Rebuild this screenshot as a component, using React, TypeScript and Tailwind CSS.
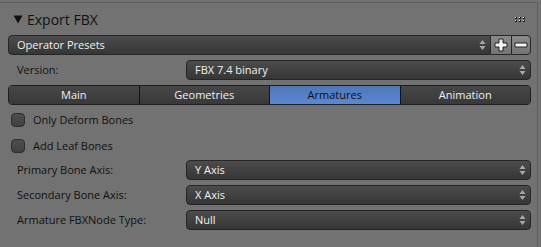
import React from "react";

const font = { fontFamily: '"Open Sans", "Noto Sans", sans-serif' };

function Arrows() {
  return (
    <svg width="7" height="12" viewBox="0 0 7 12" className="shrink-0">
      <path d="M3.5 1 L6.5 5 L0.5 5 Z" fill="#a8a8a8" />
      <path d="M3.5 11 L6.5 7 L0.5 7 Z" fill="#a8a8a8" />
    </svg>
  );
}

function Select({ value, className = "" }: { value: string; className?: string }) {
  return (
    <div
      className={`flex h-[20px] items-center justify-between rounded-[4px] border border-[#262626] bg-gradient-to-b from-[#4c4c4c] to-[#363636] pl-[8px] pr-[4px] text-[11px] text-[#f0f0f0] ${className}`}
    >
      <span>{value}</span>
      <Arrows />
    </div>
  );
}

function Row({ label, value }: { label: string; value: string }) {
  return (
    <div className="flex h-[20px] items-center">
      <span className="w-[178px] pl-[9px] text-[11px] text-[#111]">{label}</span>
      <Select value={value} className="flex-1" />
    </div>
  );
}

function Check({ label }: { label: string }) {
  return (
    <div className="flex h-[26px] items-center pl-[3px]">
      <div className="h-[14px] w-[14px] rounded-[4px] border border-[#2e2e2e] bg-gradient-to-b from-[#4e4e4e] to-[#404040]" />
      <span className="ml-[8px] text-[11px] text-[#111]">{label}</span>
    </div>
  );
}

const tabs = ["Main", "Geometries", "Armatures", "Animation"];

export default function App() {
  return (
    <div className="h-[247px] w-[541px] overflow-hidden bg-[#727272] pt-[2px]" style={font}>
      <div className="h-[245px] w-[538px] border-r border-t border-[#5f5f5f]">
        <div className="flex h-[32px] items-center justify-between pl-[13px] pr-[12px]">
          <div className="flex items-center text-[14px] text-[#111]">
            <svg width="10" height="9" viewBox="0 0 10 9" className="mr-[4px]">
              <path d="M0.5 0.5 L9.5 0.5 L5 8.5 Z" fill="#111" />
            </svg>
            Export FBX
          </div>
          <svg width="10" height="5" viewBox="0 0 10 5">
            {[0, 4, 8].map((x) =>
              [0, 3].map((y) => (
                <g key={`${x}-${y}`}>
                  <rect x={x} y={y} width="2" height="2" fill="#1a1a1a" />
                  <rect x={x} y={y} width="1" height="1" fill="#e8e8e8" />
                </g>
              ))
            )}
          </svg>
        </div>
        <div className="flex flex-col pl-[8px] pr-[6px]">
          <div className="flex h-[20px]">
            <div className="flex flex-1 items-center justify-between rounded-l-[4px] border border-[#262626] bg-gradient-to-b from-[#4c4c4c] to-[#363636] pl-[8px] pr-[4px] text-[11px] text-[#f0f0f0]">
              <span>Operator Presets</span>
              <Arrows />
            </div>
            <div className="flex w-[20px] items-center justify-center border-y border-[#262626] bg-gradient-to-b from-[#8a8a8a] to-[#747474]">
              <svg width="14" height="14" viewBox="0 0 14 14">
                <path d="M5 1 H9 V5 H13 V9 H9 V13 H5 V9 H1 V5 H5 Z" fill="#f4f4f4" stroke="#222" strokeWidth="1" />
              </svg>
            </div>
            <div className="flex w-[20px] items-center justify-center rounded-r-[4px] border border-[#262626] bg-gradient-to-b from-[#8a8a8a] to-[#747474]">
              <svg width="14" height="14" viewBox="0 0 14 14">
                <path d="M1 5 H13 V9 H1 Z" fill="#f4f4f4" stroke="#222" strokeWidth="1" />
              </svg>
            </div>
          </div>
          <div className="mt-[5px]">
            <Row label="Version:" value="FBX 7.4 binary" />
          </div>
          <div className="mt-[5px] flex h-[20px] overflow-hidden rounded-[4px] border border-[#1e1e1e] text-[11px]">
            {tabs.map((t, i) => (
              <div
                key={t}
                className={`flex flex-1 items-center justify-center ${i > 0 ? "border-l border-[#151515]" : ""} ${
                  t === "Armatures"
                    ? "bg-gradient-to-b from-[#4e77bb] to-[#5b88cf] text-[#111]"
                    : "bg-gradient-to-b from-[#474747] to-[#393939] text-[#f0f0f0]"
                }`}
              >
                {t}
              </div>
            ))}
          </div>
          <div className="mt-[2px]">
            <Check label="Only Deform Bones" />
            <Check label="Add Leaf Bones" />
          </div>
          <div className="mt-[1px] flex flex-col gap-[5px]">
            <Row label="Primary Bone Axis:" value="Y Axis" />
            <Row label="Secondary Bone Axis:" value="X Axis" />
            <Row label="Armature FBXNode Type:" value="Null" />
          </div>
        </div>
      </div>
    </div>
  );
}
